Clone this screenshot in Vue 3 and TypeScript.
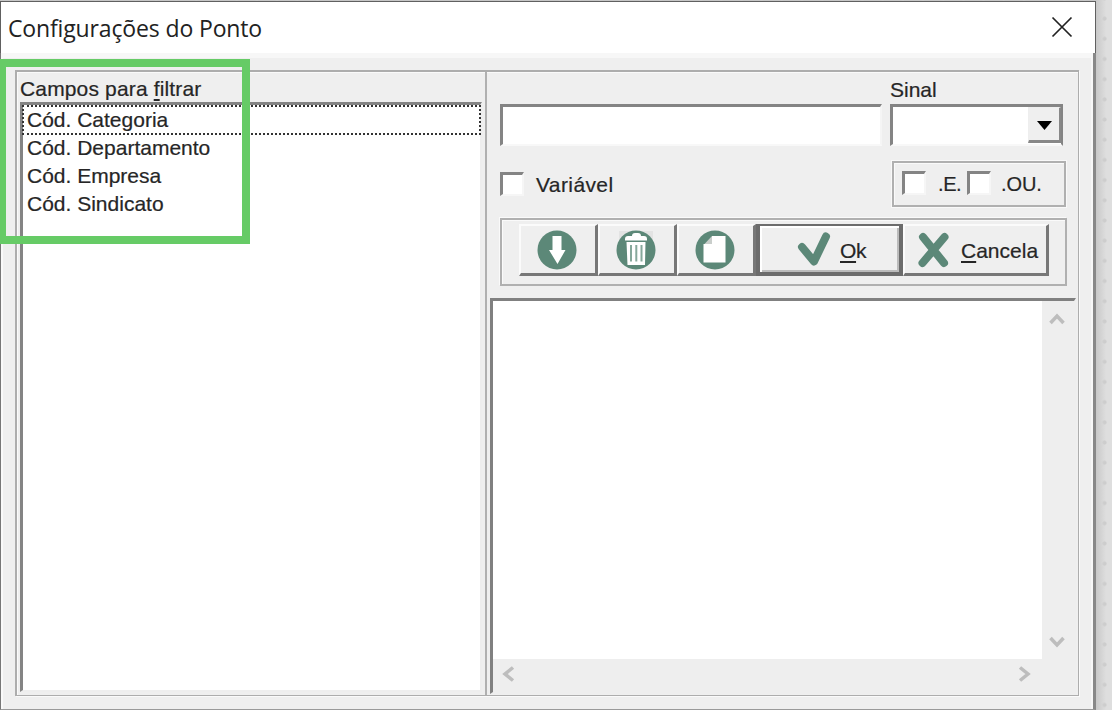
<script setup lang="ts">
import { ref } from 'vue'

const fields: string[] = ['Cód. Categoria', 'Cód. Departamento', 'Cód. Empresa', 'Cód. Sindicato']
const selected = ref(0)
</script>

<template>
  <div class="desktop">
    <div class="window">
      <header class="titlebar">
        <h1>Configurações do Ponto</h1>
        <svg class="close" width="22" height="22" viewBox="0 0 22 22"><path d="M1.5 1.5 20.5 20.5M20.5 1.5 1.5 20.5" /></svg>
      </header>
      <main class="client">
        <div class="frame">
          <section class="left">
            <label class="caption"><span>Campos para <u>f</u>iltrar</span></label>
            <ul class="list">
              <li v-for="(f, i) in fields" :key="f" :class="{ focus: i === selected }" @click="selected = i"><span>{{ f }}</span></li>
            </ul>
          </section>
          <section class="right">
            <div class="inputs">
              <div class="edit"></div>
              <div class="signal">
                <label>Sinal</label>
                <div class="combo">
                  <button class="drop"><svg width="15" height="9" viewBox="0 0 15 9"><path d="M0 0H15L7.5 9Z" /></svg></button>
                </div>
              </div>
            </div>
            <div class="options">
              <i class="check"></i><span class="variable">Variável</span>
              <div class="logic">
                <i class="check"></i><span class="e">.E.</span><i class="check"></i><span class="ou">.OU.</span>
              </div>
            </div>
            <div class="toolbar">
              <button class="btn tool">
                <svg width="40" height="40" viewBox="0 0 40 40"><circle cx="20" cy="20" r="19.5" /><path class="w" d="M15.500 6H24.500V20H28.500L20.500 34 12 20H15.500Z" /></svg>
              </button>
              <button class="btn tool">
                <svg width="40" height="40" viewBox="0 0 40 40"><path class="shade" d="M3 1H37V12H3Z" /><circle cx="20" cy="20" r="19.500" /><path class="w" d="M9 9Q9 6 12 6H16Q16 3 19 3H22Q25 3 25 6H28Q31 6 31 9V10.500H9ZM10.500 12H29.500L29 35H11.500Z" /><path class="bars" d="M15 15V31.500M20.300 15V31.500M25.500 15V31.500" /></svg>
              </button>
              <button class="btn tool">
                <svg width="40" height="40" viewBox="0 0 40 40"><circle cx="20" cy="20" r="19.500" /><path class="w" d="M17 6H30.500V32.500H8.500V14H17Z" /><path class="fold" d="M17 6V14H9.500Z" /></svg>
              </button>
              <button class="btn ok">
                <svg width="34" height="36" viewBox="0 0 34 36"><path class="stroke" d="M5 16 17 30.500 29 5.500" /></svg>
                <span><u>O</u>k</span>
              </button>
              <button class="btn cancel">
                <svg width="32" height="36" viewBox="0 0 32 36"><path class="stroke" d="M5 5 26 31M26.500 5 4.500 31" /></svg>
                <span><u>C</u>ancela</span>
              </button>
            </div>
            <div class="memo">
              <div class="paper"></div>
              <div class="vbar">
                <svg width="16" height="13" viewBox="0 0 16 13"><path d="M1.500 11 8 4 14.500 11" /></svg>
                <svg width="16" height="13" viewBox="0 0 16 13"><path d="M1.500 2 8 9 14.500 2" /></svg>
              </div>
              <div class="hbar">
                <svg width="13" height="16" viewBox="0 0 13 16"><path d="M11 1.500 3 8 11 14.500" /></svg>
                <svg width="13" height="16" viewBox="0 0 13 16"><path d="M2 1.500 10 8 2 14.500" /></svg>
              </div>
            </div>
          </section>
        </div>
      </main>
    </div>
    <div class="highlight"></div>
  </div>
</template>

<style>
body { overflow: hidden; }
</style>

<style scoped>
* { box-sizing: border-box; }
.desktop {
  position: relative;
  width: 1112px;
  height: 710px;
  padding-top: 1px;
  background-image: radial-gradient(circle, #cdcdcd 1.6px, transparent 2.4px), linear-gradient(90deg, #c6c6c6 1095px, #dedede 1106px);
  background-size: 20.200px 20.200px, auto;
  background-position: 1094.500px 8.500px, 0 0;
  font: 21px/28px "Liberation Sans", Arial, sans-serif;
  color: #262626;
  -webkit-text-stroke: .2px #262626;
  overflow: hidden;
}
.window { width: 1096px; height: 709px; display: flex; flex-direction: column; }
.titlebar {
  height: 52px;
  border: solid #606060;
  border-width: 1px 1px 0 1px;
  background: #fff;
  display: flex;
  justify-content: space-between;
  padding: 0 22px 0 7px;
}
h1 { margin: 9px 0 0; font: 400 23px/34px "Open Sans", "Noto Sans", sans-serif; letter-spacing: -.14px; color: #222; white-space: nowrap; -webkit-text-stroke: 0; }
.close { margin-top: 14px; fill: none; stroke: #222; stroke-width: 1.700; }
.client {
  flex: 1;
  background: #efefef;
  border-left: 1px solid #777;
  border-right: 3px solid #888;
  border-bottom: 1px solid #9a9a9a;
  box-shadow: inset 0 5px 0 #f7f7f7, inset -2px 0 0 #f7f7f7, inset 2px 0 0 #f9f9f9;
  padding: 17px 14px 0 14px;
}
.frame {
  height: 626px;
  border: solid #adadad;
  border-width: 2px 1px 1px 2px;
  box-shadow: inset 1px 1px 0 #fafafa, 1px 1px 0 #fafafa;
  display: flex;
}
.left { width: 470px; border-right: 2px solid #b0b0b0; padding: 3px 3px 3px 3px; display: flex; flex-direction: column; }
.caption { height: 27px; }
.caption span { letter-spacing: .15px; }
u { text-decoration-thickness: 2px; text-underline-offset: 3px; text-decoration-skip-ink: none; }
.list {
  flex: 1;
  margin: 0;
  padding: 1px 0 0;
  list-style: none;
  background: #fff;
  border: solid;
  border-width: 3px 2px 2px 3px;
  border-color: #848484 #eee #eee #848484;
}
li { height: 28px; padding-left: 4px; }
.focus { outline: 2px dotted #333; outline-offset: -1px; }
.right { flex: 1; display: flex; flex-direction: column; padding-left: 3px; }
.inputs { display: flex; height: 74px; padding-left: 10px; align-items: flex-end; }
.edit { width: 382px; height: 42px; background: #fff; border: solid; border-width: 3px 2px 2px 3px; border-color: #848484 #f5f5f5 #f8f8f8 #848484; }
.signal { margin-left: 8px; width: 173px; }
.signal label { display: block; line-height: 28px; }
.combo { height: 42px; background: #fff; border: solid; border-width: 3px 2px 2px 3px; border-color: #848484 #848484 #f8f8f8 #848484; display: flex; justify-content: flex-end; }
.drop { width: 33px; height: 36px; padding: 2px 0 0; border: solid; border-width: 1px 2px 3px 1px; border-color: #eee #888 #888 #eee; background: #efefef; display: grid; place-items: center; }
.options { display: flex; height: 46px; margin: 15px 0 0 10px; align-items: center; }
.check { width: 24px; height: 24px; background: #fff; border: solid; border-width: 3px 2px 2px 3px; border-color: #848484 #f6f6f6 #f6f6f6 #848484; }
.variable { margin-left: 12px; width: 356px; letter-spacing: .4px; padding-top: 2px; }
.logic { width: 174px; height: 46px; border: 2px solid #b0b0b0; outline: 1px solid #f9f9f9; box-shadow: inset 1px 1px 0 #fafafa; display: flex; align-items: center; padding: 0 0 2px 8px; }
.logic .e, .logic .ou { font-size: 20px; padding-top: 1px; }
.logic .e { width: 29px; margin-left: 12px; letter-spacing: -.4px; }
.logic .ou { margin-left: 10px; letter-spacing: -.1px; }
.toolbar { display: flex; width: 567px; height: 68px; margin: 11px 0 0 10px; padding: 4px 0 0 17px; border: 2px solid #b0b0b0; box-shadow: inset 1px 1px 0 #fafafa, -1px -1px 0 #fafafa; }
.btn { height: 52px; background: #efefef; border: solid; border-width: 2px 3px 3px 2px; border-color: #fbfbfb #777 #777 #fbfbfb; font: inherit; color: inherit; padding: 0; display: flex; align-items: center; flex: none; }
.tool { width: 79px; justify-content: center; padding-top: 1px; }
.tool svg { margin-right: 2px; }
circle { fill: #5c8878; }
.w { fill: #fff; }
.shade { fill: #e3e3e3; }
.bars { stroke: #86a89b; stroke-width: 2; }
.fold { fill: #c9cecb; }
.ok { width: 147px; padding-left: 37px; border: 4px solid #6c6c6c; border-width: 2px 4px 4px 4px; box-shadow: inset 2px 2px 0 #fff, inset -2px -2px 0 #bbb; }
.ok svg { margin-top: 0; }
.ok span { margin-left: 9px; padding-top: 3px; letter-spacing: -.3px; }
.stroke { fill: none; stroke: #5c8878; stroke-width: 8; stroke-linecap: round; stroke-linejoin: round; }
.cancel { width: 146px; padding-left: 13px; }
.cancel svg { margin-top: 1px; }
.cancel span { margin-left: 11px; padding-top: 2px; }
.memo { flex: 1; width: 586px; margin: 12px 0 1px; border: solid; border-width: 3px 2px 2px 3px; border-color: #808080 #eee #eee #808080; display: grid; grid-template: 1fr 33px / 1fr 32px; background: #eee; }
.paper { background: #fff; }
.vbar { display: flex; flex-direction: column; justify-content: space-between; align-items: center; padding: 11px 2px 10px 0; }
.hbar { display: flex; justify-content: space-between; align-items: center; padding: 0 11px 3px 9px; }
.vbar path, .hbar path { fill: none; stroke: #bdbdbd; stroke-width: 3.500; }
.highlight { position: absolute; left: 0; top: 59px; width: 250px; height: 185px; border: 8px solid #66cb66; border-left-width: 6px; }
</style>
